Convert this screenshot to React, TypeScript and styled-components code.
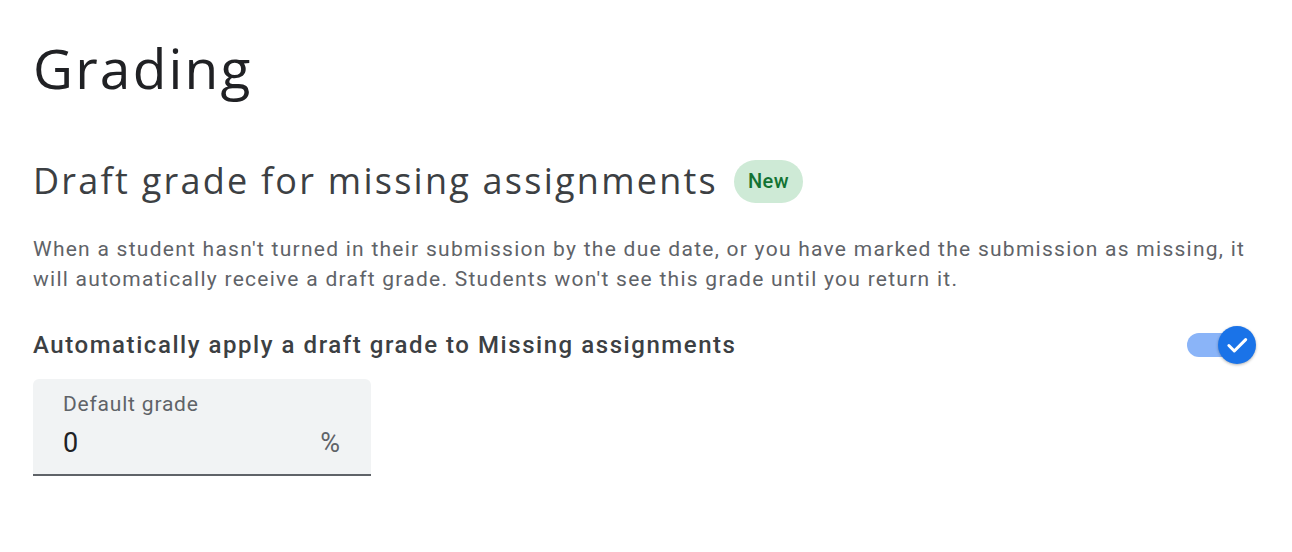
import React from "react";
import styled, { createGlobalStyle } from "styled-components";

const Global = createGlobalStyle`
  html, body { margin: 0; padding: 0; background: #ffffff; }
  body { font-family: Roboto, "Noto Sans", Arial, sans-serif; }
`;

const Page = styled.div`
  width: 1292px;
  height: 552px;
  box-sizing: border-box;
  padding: 28px 36px 0 33px;
  display: flex;
  flex-direction: column;
`;

const Title = styled.h1`
  margin: 0;
  font-family: "Open Sans", Roboto, sans-serif;
  font-weight: 400;
  font-size: 55px;
  line-height: 80px;
  color: #202124;
  letter-spacing: 2.2px;
`;

const SectionHead = styled.div`
  margin-top: 49px;
  display: flex;
  align-items: center;
  gap: 16px;
`;

const SectionTitle = styled.h2`
  margin: 0;
  font-family: "Open Sans", Roboto, sans-serif;
  font-weight: 400;
  font-size: 36px;
  line-height: 48px;
  color: #3c4043;
  letter-spacing: 2.25px;
`;

const Badge = styled.span`
  display: inline-flex;
  align-items: center;
  justify-content: center;
  height: 43px;
  width: 69px;
  box-sizing: border-box;
  border-radius: 22px;
  background: #ceead6;
  color: #137333;
  font-family: Roboto, sans-serif;
  font-weight: 500;
  font-size: 20px;
  letter-spacing: 0.5px;
`;

const Description = styled.p`
  margin: 29px 0 0 0;
  font-size: 21px;
  line-height: 30px;
  color: #5f6368;
  letter-spacing: 1.26px;
  max-width: 1226px;
`;

const SettingRow = styled.div`
  margin-top: 33px;
  display: flex;
  align-items: center;
  justify-content: space-between;
  padding-right: 17px;
`;

const SettingLabel = styled.span`
  font-size: 24px;
  font-weight: 500;
  color: #3c4043;
  line-height: 36px;
  letter-spacing: 1.55px;
`;

const Switch = styled.div`
  position: relative;
  width: 52px;
  height: 24px;
  border-radius: 12px;
  background: #8ab4f8;
`;

const Thumb = styled.div`
  position: absolute;
  right: -17px;
  top: -7px;
  width: 38px;
  height: 38px;
  border-radius: 50%;
  background: #1a73e8;
  box-shadow: 0 1px 3px rgba(0, 0, 0, 0.3);
  display: flex;
  align-items: center;
  justify-content: center;
`;

const Field = styled.div`
  margin-top: 16px;
  width: 338px;
  height: 97px;
  box-sizing: border-box;
  background: #f1f3f4;
  border-radius: 6px 6px 0 0;
  border-bottom: 2px solid #5f6368;
  padding: 12px 30px 0 30px;
  display: flex;
  flex-direction: column;
`;

const FieldLabel = styled.span`
  font-size: 21px;
  line-height: 26px;
  color: #5f6368;
  letter-spacing: 0.8px;
`;

const FieldValueRow = styled.div`
  margin-top: 10px;
  display: flex;
  justify-content: space-between;
  align-items: baseline;
`;

const FieldValue = styled.span`
  font-size: 27px;
  color: #202124;
`;

const Suffix = styled.span`
  font-size: 27px;
  color: #5f6368;
  margin-right: 1px;
`;

export default function App() {
  return (
    <>
      <Global />
      <Page>
        <Title>Grading</Title>
        <SectionHead>
          <SectionTitle>Draft grade for missing assignments</SectionTitle>
          <Badge>New</Badge>
        </SectionHead>
        <Description>
          When a student hasn't turned in their submission by the due date, or you have marked the submission as missing, it
          will automatically receive a draft grade. Students won't see this grade until you return it.
        </Description>
        <SettingRow>
          <SettingLabel>Automatically apply a draft grade to Missing assignments</SettingLabel>
          <Switch>
            <Thumb>
              <svg width="26" height="26" viewBox="0 0 24 24" fill="none">
                <path d="M4.5 12.5l5 5L20 7" stroke="#ffffff" strokeWidth="2.8" strokeLinecap="round" strokeLinejoin="round" />
              </svg>
            </Thumb>
          </Switch>
        </SettingRow>
        <Field>
          <FieldLabel>Default grade</FieldLabel>
          <FieldValueRow>
            <FieldValue>0</FieldValue>
            <Suffix>%</Suffix>
          </FieldValueRow>
        </Field>
      </Page>
    </>
  );
}
